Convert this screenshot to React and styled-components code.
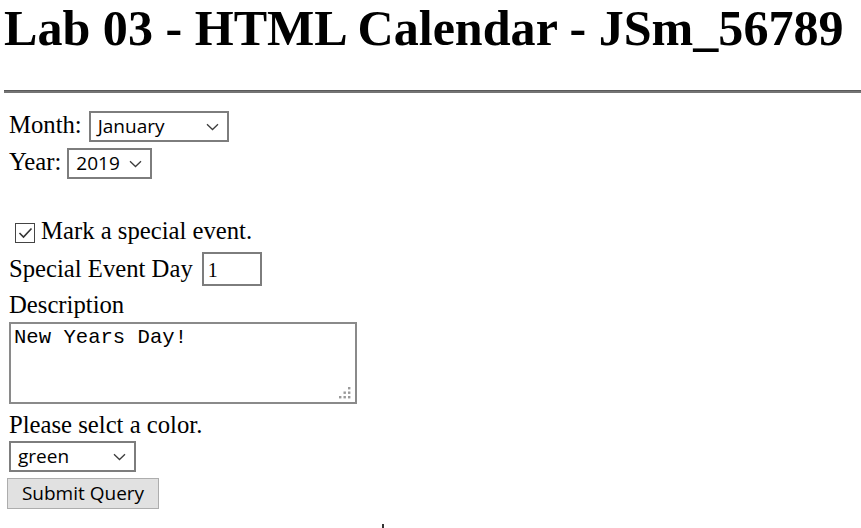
import React from 'react';
import styled, { createGlobalStyle } from 'styled-components';

const GlobalStyle = createGlobalStyle`
  html, body {
    margin: 0;
    padding: 0;
    background: #ffffff;
  }
  body {
    font-family: 'Liberation Serif', 'Times New Roman', serif;
    color: #000000;
  }
`;

const Page = styled.div`
  width: 861px;
  height: 528px;
  overflow: hidden;
`;

const Title = styled.h1`
  margin: 0;
  padding-left: 4px;
  font: bold 50.1px/57px 'Liberation Serif', 'Times New Roman', serif;
  white-space: nowrap;
`;

const Rule = styled.div`
  margin: 33px 0 0 4px;
  height: 3px;
  background: #747474;
  border-top: 1px solid #5a5a5a;
  box-sizing: border-box;
`;

const Form = styled.form`
  display: flex;
  flex-direction: column;
  align-items: flex-start;
  padding-left: 9px;
`;

const Row = styled.div`
  display: flex;
  align-items: baseline;
  gap: ${(p) => p.$gap || 0}px;
  margin-top: ${(p) => p.$mt || 0}px;
`;

const Label = styled.label`
  font-size: 24.7px;
  line-height: 27px;
  margin-top: ${(p) => p.$mt || 0}px;
  white-space: nowrap;
`;

const SelectBox = styled.div`
  display: inline-flex;
  align-items: center;
  justify-content: space-between;
  box-sizing: border-box;
  width: ${(p) => p.$w}px;
  height: 31px;
  margin-top: ${(p) => p.$mt || 0}px;
  padding: 0 8px 0 7px;
  border: 2px solid #7d7d7d;
  background: #ffffff;
  font: 19px/27px 'Open Sans', 'Noto Sans', sans-serif;
  color: #000;
`;

const Chevron = () => (
  <svg width="13" height="8" viewBox="0 0 13 8">
    <path d="M1 1.2 L6.5 6.5 L12 1.2" fill="none" stroke="#3c3c3c" strokeWidth="1.3" />
  </svg>
);

const Select = ({ value, width, mt }) => (
  <SelectBox $w={width} $mt={mt}>
    <span>{value}</span>
    <Chevron />
  </SelectBox>
);

const CheckBox = styled.span`
  display: inline-flex;
  align-items: center;
  justify-content: center;
  box-sizing: border-box;
  width: 20px;
  height: 20px;
  margin-left: 6px;
  border: 1.5px solid #444;
  background: #fff;
`;

const TextInput = styled.div`
  box-sizing: border-box;
  width: 60px;
  height: 34px;
  padding: 2px 4px 0;
  border: 2px solid #7d7d7d;
  font: 20px/28px 'Liberation Serif', 'Times New Roman', serif;
`;

const AreaWrap = styled.div`
  position: relative;
  margin-top: 4px;
`;

const Area = styled.div`
  box-sizing: border-box;
  width: 348px;
  height: 82px;
  padding: 2px 3px;
  border: 2px solid #8a8a8a;
  font: 20.6px/23px 'Liberation Mono', 'Courier New', monospace;
  white-space: pre;
`;

const Grip = styled.svg`
  position: absolute;
  right: 6px;
  bottom: 5px;
`;

const Button = styled.button`
  box-sizing: border-box;
  width: 152px;
  height: 31px;
  margin: 6px 0 0 -2px;
  padding: 0;
  border: 1px solid #adadad;
  background: #e1e1e1;
  font: 19px/29px 'Open Sans', 'Noto Sans', sans-serif;
  color: #000;
`;

const Caret = styled.span`
  display: block;
  width: 2px;
  height: 4px;
  margin: 15px 0 0 373px;
  background: #333;
`;

export default function App() {
  return (
    <Page>
      <GlobalStyle />
      <Title>Lab 03 - HTML Calendar - JSm_56789</Title>
      <Rule />
      <Form>
        <Row $mt={18} $gap={7}>
          <Label>Month:</Label>
          <Select value="January" width={140} />
        </Row>
        <Row $mt={6} $gap={6}>
          <Label>Year:</Label>
          <Select value="2019" width={85} />
        </Row>
        <Row $mt={38} $gap={6}>
          <CheckBox>
            <svg width="15" height="12" viewBox="0 0 15 12">
              <path d="M1.5 6 L5.5 10 L13.5 1.5" fill="none" stroke="#333" strokeWidth="1.6" />
            </svg>
          </CheckBox>
          <Label>Mark a special event.</Label>
        </Row>
        <Row $mt={8} $gap={9}>
          <Label>Special Event Day</Label>
          <TextInput>1</TextInput>
        </Row>
        <Label $mt={5}>Description</Label>
        <AreaWrap>
          <Area>New Years Day!</Area>
          <Grip width="13" height="12" viewBox="0 0 13 12">
            <g fill="#9a9a9a">
              <rect x="10" y="0" width="2.4" height="2.4" />
              <rect x="5.5" y="4.5" width="2.4" height="2.4" />
              <rect x="10" y="4.5" width="2.4" height="2.4" />
              <rect x="1" y="9" width="2.4" height="2.4" />
              <rect x="5.5" y="9" width="2.4" height="2.4" />
              <rect x="10" y="9" width="2.4" height="2.4" />
            </g>
          </Grip>
        </AreaWrap>
        <Label $mt={7}>Please selct a color.</Label>
        <Select value="green" width={127} mt={3} />
        <Button type="button">Submit Query</Button>
        <Caret />
      </Form>
    </Page>
  );
}
